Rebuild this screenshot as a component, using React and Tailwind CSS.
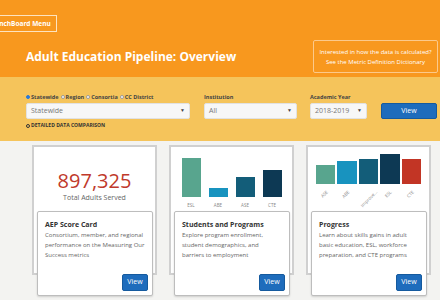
import React from 'react';

const font = { fontFamily: '"Open Sans", "Noto Sans", sans-serif' };

const Select = ({ value, className }) => (
  <div className={`h-[16px] bg-[#f7f7f7] border border-[#e2e2e2] rounded-[2px] flex items-center justify-between px-[4px] ${className}`}>
    <span className="text-[7px] text-[#777]">{value}</span>
    <span className="text-[5px] text-[#444]">▼</span>
  </div>
);

const Radio = ({ label, checked }) => (
  <span className="flex items-center gap-[1px]">
    <span className={`w-[4px] h-[4px] rounded-full border ${checked ? 'bg-[#2a7ad8] border-[#2a7ad8]' : 'bg-white border-[#999]'}`} />
    <span className="text-[5.5px] font-bold text-[#444] mr-[2px]">{label}</span>
  </span>
);

const ViewButton = () => (
  <button className="w-[26px] h-[17px] bg-[#1e6cbc] border border-[#155a9e] rounded-[2px] text-white text-[7px]">
    View
  </button>
);

const InfoPanel = ({ title, text }) => (
  <div className="relative z-10 -mt-[64px] ml-[5px] w-[116px] h-[85px] bg-white border border-[#bdbdbd] rounded-[2px] shadow-[0_1px_2px_rgba(0,0,0,0.15)] flex flex-col px-[7px] pt-[8px] pb-[4px]">
    <div className="text-[7px] font-bold text-[#333] leading-[10px]">{title}</div>
    <p className="text-[6px] text-[#666] leading-[10px]">{text}</p>
    <div className="mt-auto flex justify-end -mr-[3px]">
      <ViewButton />
    </div>
  </div>
);

const App = () => {
  const studentBars = [
    { label: 'ESL', h: 41, c: 'bg-[#58a58e]' },
    { label: 'ABE', h: 11, c: 'bg-[#1893bf]' },
    { label: 'ASE', h: 22, c: 'bg-[#135d79]' },
    { label: 'CTE', h: 29, c: 'bg-[#0d3954]' },
  ];
  const progressBars = [
    { label: 'ASE', h: 21, c: 'bg-[#58a58e]' },
    { label: 'ABE', h: 25, c: 'bg-[#1893bf]' },
    { label: 'Improve...', h: 27, c: 'bg-[#135d79]' },
    { label: 'ESL', h: 32, c: 'bg-[#0d3954]' },
    { label: 'CTE', h: 27, c: 'bg-[#c23525]' },
  ];

  return (
    <div className="w-[440px] h-[300px] overflow-hidden bg-[#f3f3f1]" style={font}>
      {/* Header */}
      <header className="h-[77px] bg-[#f8981e] flex flex-col">
        <div className="pt-[8px]">
          <button className="-ml-[15px] h-[17px] px-[5px] border border-[#fde3bf] text-white text-[6.5px] font-bold">
            BenchBoard Menu
          </button>
        </div>
        <div className="flex items-center justify-between pl-[26px] pr-[2px] mt-[8px]">
          <h1 className="text-[12px] font-bold text-white mt-[1px]">Adult Education Pipeline: Overview</h1>
          <div className="w-[125px] h-[33px] border border-[#fcc98a] rounded-[2px] flex flex-col items-center justify-center text-[6px] text-white leading-[10px]">
            <span>Interested in how the data is calculated?</span>
            <span>See the Metric Definition Dictionary</span>
          </div>
        </div>
      </header>

      {/* Filters */}
      <section className="h-[64px] bg-[#f5c45b] flex pl-[26px] pt-[16px] gap-[14px]">
        <div className="flex flex-col w-[164px]">
          <div className="flex items-center h-[8px] mb-[2px]">
            <Radio label="Statewide" checked />
            <Radio label="Region" />
            <Radio label="Consortia" />
            <Radio label="CC District" />
          </div>
          <Select value="Statewide" />
          <div className="flex items-center gap-[1px] mt-[3px]">
            <span className="w-[4px] h-[4px] rounded-full border border-[#333]" />
            <span className="text-[5px] font-bold text-[#333]">DETAILED DATA COMPARISON</span>
          </div>
        </div>
        <div className="flex flex-col w-[93px]">
          <span className="text-[5.5px] font-bold text-[#444] h-[8px] mb-[2px] flex items-center">Institution</span>
          <Select value="All" />
        </div>
        <div className="flex flex-col w-[57px] -ml-[1px]">
          <span className="text-[5.5px] font-bold text-[#444] h-[8px] mb-[2px] flex items-center">Academic Year</span>
          <Select value="2018-2019" />
        </div>
        <div className="flex flex-col">
          <div className="h-[10px]" />
          <button className="w-[56px] h-[16px] bg-[#1e6cbc] border border-[#155a9e] rounded-[2px] text-white text-[7px]">
            View
          </button>
        </div>
      </section>

      {/* Cards */}
      <main className="grid grid-cols-[125px_125px_125px] gap-x-[12px] pl-[32px] pt-[4px]">
        <div>
          <div className="h-[130px] bg-white border-2 border-[#d0d0d0] flex flex-col items-center pt-[21px]">
            <span className="text-[20px] leading-[25px] text-[#c0392b]">897,325</span>
            <span className="text-[7px] leading-[10px] text-[#666]">Total Adults Served</span>
          </div>
          <InfoPanel
            title="AEP Score Card"
            text="Consortium, member, and regional performance on the Measuring Our Success metrics"
          />
        </div>

        <div>
          <div className="h-[130px] bg-white border-2 border-[#d0d0d0] flex justify-center gap-[6px] pt-[10px]">
            {studentBars.map(b => (
              <div key={b.label} className="flex flex-col items-center w-[21px]">
                <div className="h-[41px] w-full flex items-end">
                  <div className={`w-full border border-white ${b.c}`} style={{ height: b.h }} />
                </div>
                <span className="text-[4.5px] text-[#888] mt-[4px]">{b.label}</span>
              </div>
            ))}
          </div>
          <InfoPanel
            title="Students and Programs"
            text="Explore program enrollment, student demographics, and barriers to employment"
          />
        </div>

        <div>
          <div className="h-[130px] bg-white border-2 border-[#d0d0d0] flex justify-center pt-[5px]">
            {progressBars.map(b => (
              <div key={b.label} className="flex flex-col items-center w-[21.5px]">
                <div className="h-[33px] w-full flex items-end">
                  <div className={`w-full border border-white ${b.c}`} style={{ height: b.h }} />
                </div>
                <span className="text-[4.5px] text-[#888] mt-[4px] -rotate-45 whitespace-nowrap origin-top-right -translate-x-[5px]">{b.label}</span>
              </div>
            ))}
          </div>
          <InfoPanel
            title="Progress"
            text="Learn about skills gains in adult basic education, ESL, workforce preparation, and CTE programs"
          />
        </div>
      </main>
    </div>
  );
};

export default App;
